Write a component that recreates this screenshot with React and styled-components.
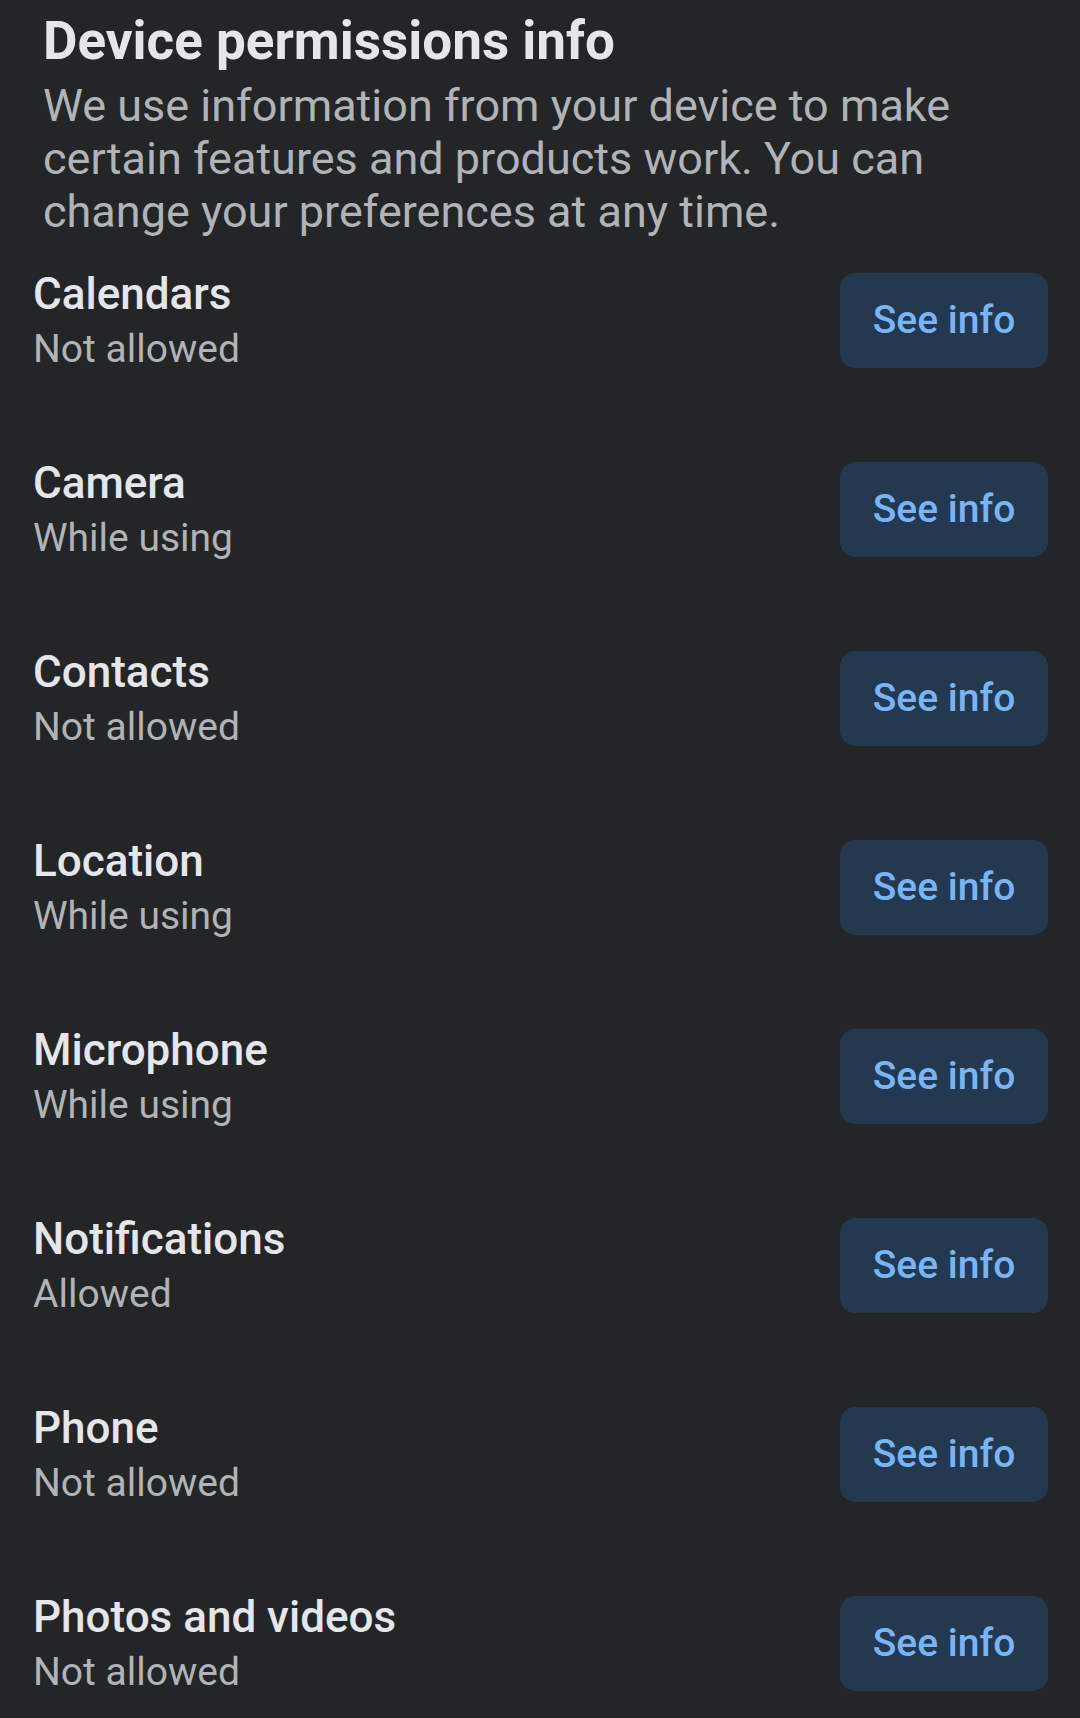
import React from "react";
import styled, { createGlobalStyle } from "styled-components";

const Global = createGlobalStyle`
  html, body {
    margin: 0;
    padding: 0;
    background: #242526;
  }
  body {
    font-family: Roboto, "Noto Sans", "Liberation Sans", sans-serif;
    -webkit-font-smoothing: antialiased;
  }
`;

const Page = styled.div`
  min-height: 1718px;
  background: #242526;
  box-sizing: border-box;
  padding-top: 11px;
`;

const Header = styled.header`
  padding: 0 43px;
  display: flex;
  flex-direction: column;
  gap: 8px;
`;

const Title = styled.h1`
  margin: 0;
  font-size: 53px;
  line-height: 60px;
  font-weight: 700;
  color: #e4e6eb;
`;

const Description = styled.p`
  margin: 0;
  font-size: 45px;
  line-height: 53px;
  font-weight: 400;
  color: #b0b3b8;
`;

const List = styled.ul`
  list-style: none;
  margin: 30px 0 0;
  padding: 0 32px 0 33px;
  display: flex;
  flex-direction: column;
  gap: 80px;
`;

const Row = styled.li`
  display: flex;
  align-items: center;
  justify-content: space-between;
  height: 109px;
`;

const Texts = styled.div`
  display: flex;
  flex-direction: column;
`;

const Name = styled.span`
  font-size: 44px;
  line-height: 52px;
  margin-bottom: 2px;
  font-weight: 500;
  color: #e4e6eb;
`;

const Status = styled.span`
  font-size: 39px;
  line-height: 55px;
  font-weight: 400;
  color: #b0b3b8;
`;

const InfoButton = styled.button`
  width: 208px;
  height: 95px;
  border: none;
  border-radius: 15px;
  background: #243850;
  color: #78b5f6;
  font-family: inherit;
  font-size: 39px;
  font-weight: 500;
  display: flex;
  align-items: center;
  justify-content: center;
  padding: 0;
  margin-bottom: 5px;
  cursor: pointer;
`;

const permissions = [
  { name: "Calendars", status: "Not allowed" },
  { name: "Camera", status: "While using" },
  { name: "Contacts", status: "Not allowed" },
  { name: "Location", status: "While using" },
  { name: "Microphone", status: "While using" },
  { name: "Notifications", status: "Allowed" },
  { name: "Phone", status: "Not allowed" },
  { name: "Photos and videos", status: "Not allowed" },
];

export default function App() {
  return (
    <>
      <Global />
      <Page>
        <Header>
          <Title>Device permissions info</Title>
          <Description>
            We use information from your device to make certain features and
            products work. You can change your preferences at any time.
          </Description>
        </Header>
        <List>
          {permissions.map((p) => (
            <Row key={p.name}>
              <Texts>
                <Name>{p.name}</Name>
                <Status>{p.status}</Status>
              </Texts>
              <InfoButton>See info</InfoButton>
            </Row>
          ))}
        </List>
      </Page>
    </>
  );
}
